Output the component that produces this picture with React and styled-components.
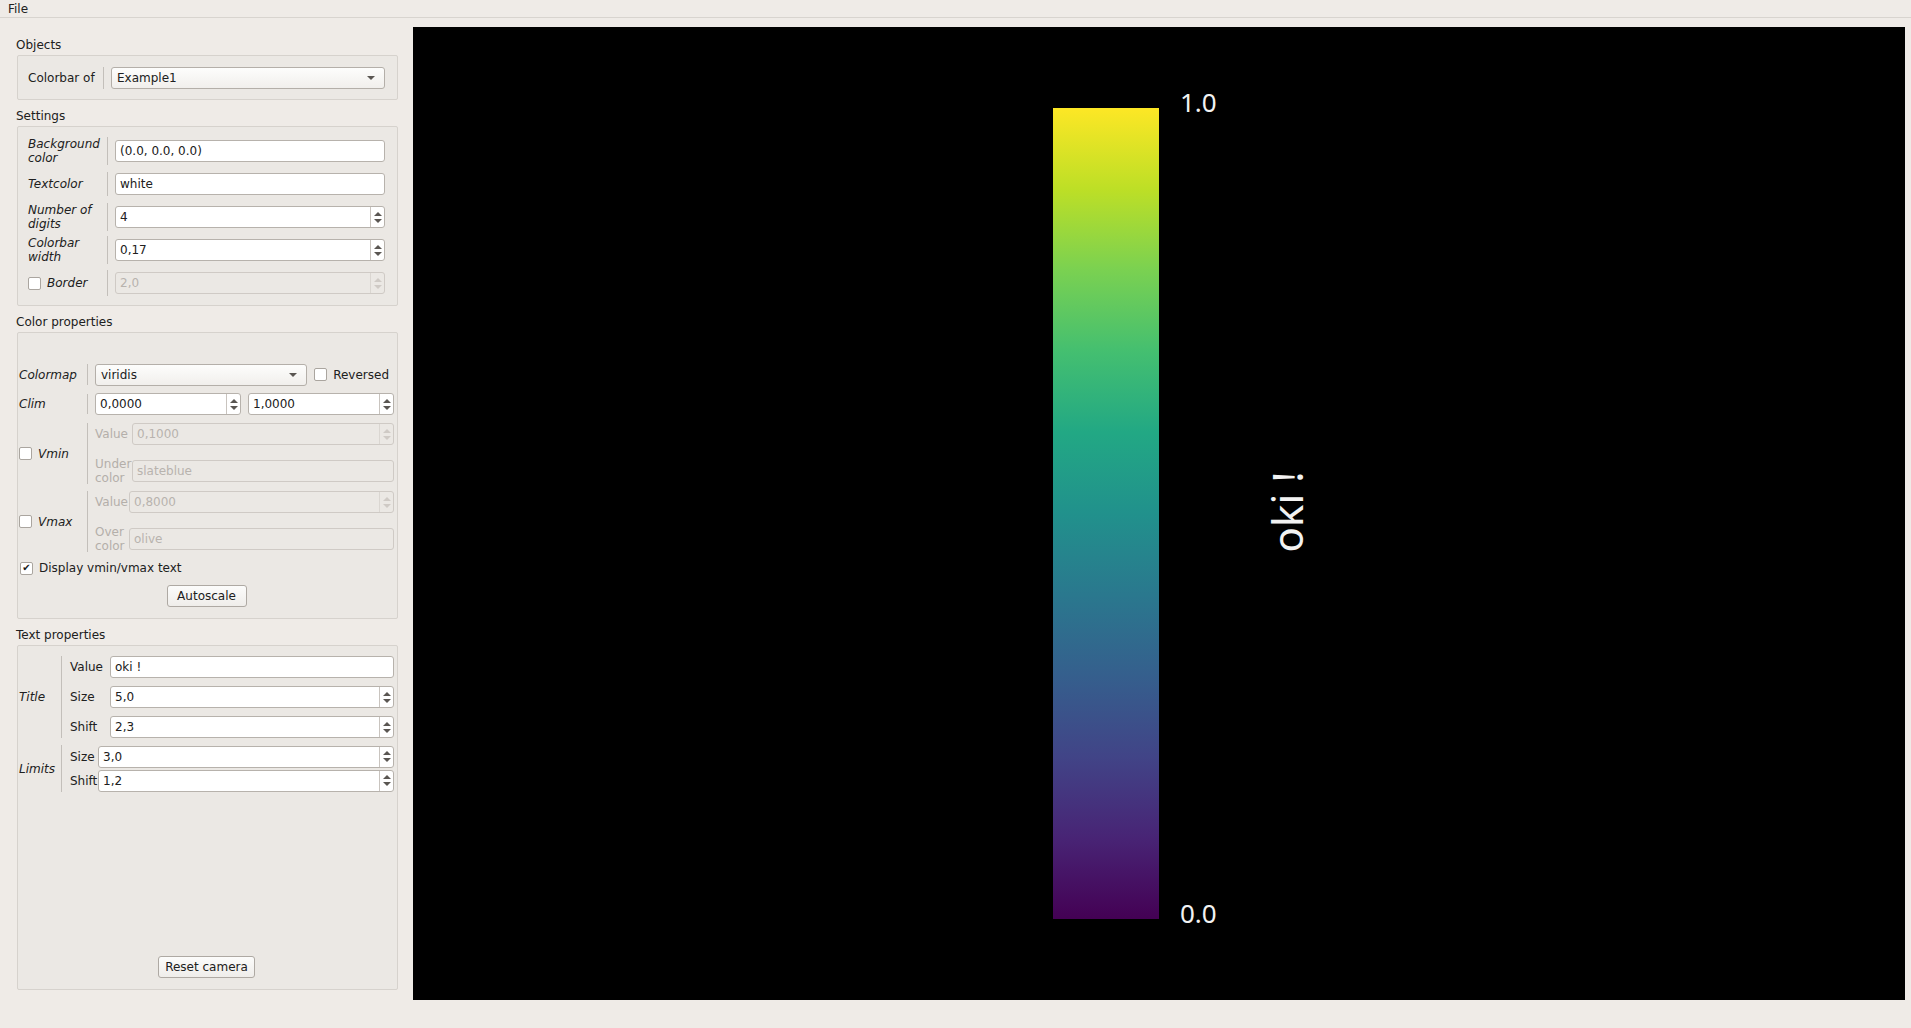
import styled, { createGlobalStyle } from "styled-components";

const GlobalStyle = createGlobalStyle`
  html, body {
    margin: 0;
    padding: 0;
  }
  body {
    background: #efebe7;
    font-family: "DejaVu Sans", "Liberation Sans", sans-serif;
    font-size: 12px;
    color: #202020;
    overflow: hidden;
  }
`;

const Window = styled.div`
  width: 1911px;
  height: 1028px;
  display: flex;
  flex-direction: column;
`;

const MenuBar = styled.div`
  height: 17px;
  border-bottom: 1px solid #d8d4cf;
  display: flex;
  align-items: center;
  padding-left: 8px;
  span {
    line-height: 14px;
  }
`;

const Body = styled.div`
  flex: 1;
  display: flex;
`;

const Sidebar = styled.div`
  width: 381px;
  flex-shrink: 0;
  padding: 19px 15px 0 17px;
  display: flex;
  flex-direction: column;
`;

const GroupTitle = styled.div`
  height: 14px;
  line-height: 14px;
  margin: 1px 0 3px -1px;
`;

const GroupBox = styled.div`
  box-sizing: border-box;
  height: ${(p) => p.$h}px;
  border: 1px solid #d6d2cd;
  border-radius: 2px;
  background: #ebe8e4;
  margin-bottom: 8px;
  padding: ${(p) => p.$pad};
  display: flex;
  flex-direction: column;
  gap: ${(p) => p.$gap || 0}px;
`;

const Row = styled.div`
  display: grid;
  grid-template-columns: ${(p) => p.$label}px 1px 1fr;
  column-gap: ${(p) => p.$gap || 7}px;
  align-items: center;
  height: ${(p) => p.$h}px;
`;

const Sep = styled.div`
  align-self: stretch;
  width: 1px;
  background: #c3bfba;
  margin: ${(p) => p.$m ?? 1}px 0;
`;

const Label = styled.div`
  font-style: ${(p) => (p.$italic ? "italic" : "normal")};
  color: ${(p) => (p.$disabled ? "#b4afaa" : "#202020")};
  line-height: 14px;
  display: flex;
  align-items: center;
  gap: 6px;
  white-space: nowrap;
`;

const Field = styled.div`
  box-sizing: border-box;
  height: 22px;
  border: 1px solid ${(p) => (p.$disabled ? "#cfcac5" : "#b7b2ac")};
  border-radius: 3px;
  background: ${(p) => (p.$disabled ? "#ebe8e4" : "#ffffff")};
  color: ${(p) => (p.$disabled ? "#b8b3ae" : "#202020")};
  display: flex;
  align-items: center;
  padding-left: 4px;
  overflow: hidden;
  min-width: 0;
  span {
    flex: 1;
    white-space: nowrap;
  }
`;

const Arrows = styled.div`
  width: 13px;
  align-self: stretch;
  border-left: 1px solid ${(p) => (p.$disabled ? "#dad6d1" : "#c9c4bf")};
  display: flex;
  flex-direction: column;
  align-items: center;
  justify-content: center;
  gap: 3px;
`;

const Tri = styled.div`
  width: 0;
  height: 0;
  border-left: 4px solid transparent;
  border-right: 4px solid transparent;
  ${(p) => (p.$up ? "border-bottom" : "border-top")}: 4px solid
    ${(p) => (p.$disabled ? "#cfcac5" : "#5a5652")};
`;

const Combo = styled.div`
  box-sizing: border-box;
  height: 22px;
  border: 1px solid #b4afa9;
  border-radius: 3px;
  background: linear-gradient(#fdfdfc, #f1efec);
  display: flex;
  align-items: center;
  justify-content: space-between;
  padding: 0 9px 0 5px;
  min-width: 0;
`;

const Box = styled.div`
  box-sizing: border-box;
  width: 13px;
  height: 13px;
  border: 1px solid #aaa59f;
  border-radius: 2px;
  background: #fff;
  display: flex;
  align-items: center;
  justify-content: center;
  font-size: 10px;
  font-style: normal;
  line-height: 1;
  color: #1a1a1a;
  flex-shrink: 0;
`;

const Button = styled.div`
  box-sizing: border-box;
  height: 22px;
  min-width: 80px;
  padding: 0 6px;
  border: 1px solid #aea9a3;
  border-radius: 3px;
  background: linear-gradient(#fcfcfb, #efedea);
  display: flex;
  align-items: center;
  justify-content: center;
  align-self: center;
`;

const Pair = styled.div`
  display: grid;
  grid-template-columns: ${(p) => p.$cols};
  column-gap: ${(p) => p.$gap || 7}px;
  align-items: center;
  min-width: 0;
`;

const SubBlock = styled.div`
  display: flex;
  flex-direction: column;
  gap: ${(p) => p.$gap}px;
`;

const SubRow = styled.div`
  display: grid;
  grid-template-columns: ${(p) => p.$label}px 1fr;
  column-gap: ${(p) => p.$gap || 2}px;
  align-items: center;
  height: ${(p) => p.$h || 22}px;
`;

const Spacer = styled.div`
  flex: 1;
`;

const Canvas = styled.div`
  flex: 1;
  background: #000;
  margin: 9px 6px 28px 0;
  svg {
    display: block;
  }
`;

function Spin({ value, disabled }) {
  return (
    <Field $disabled={disabled} style={{ paddingRight: 0 }}>
      <span>{value}</span>
      <Arrows $disabled={disabled}>
        <Tri $up $disabled={disabled} />
        <Tri $disabled={disabled} />
      </Arrows>
    </Field>
  );
}

function Select({ value }) {
  return (
    <Combo>
      <span>{value}</span>
      <Tri />
    </Combo>
  );
}

const viridis = [
  "#440154", "#482475", "#414487", "#355f8d", "#2a788e", "#21918c",
  "#22a884", "#44bf70", "#7ad151", "#bddf26", "#fde725",
];

function ColorbarView() {
  return (
    <svg width="1492" height="973" viewBox="0 0 1492 973">
      <defs>
        <linearGradient id="viridis" x1="0" y1="1" x2="0" y2="0">
          {viridis.map((c, i) => (
            <stop key={c} offset={i / (viridis.length - 1)} stopColor={c} />
          ))}
        </linearGradient>
      </defs>
      <rect x="640" y="81" width="106" height="811" fill="url(#viridis)" />
      <g fill="#f2f2f2" fontFamily="'Noto Sans', 'Open Sans', sans-serif">
        <text x="767" y="85" fontSize="26">1.0</text>
        <text x="767" y="896" fontSize="26">0.0</text>
        <text
          transform="translate(890 485) rotate(-90)"
          textAnchor="middle"
          fontSize="42"
        >
          oki !
        </text>
      </g>
    </svg>
  );
}

export default function App() {
  return (
    <Window>
      <GlobalStyle />
      <MenuBar>
        <span>File</span>
      </MenuBar>
      <Body>
        <Sidebar>
          <GroupTitle>Objects</GroupTitle>
          <GroupBox $h={45} $pad="11px 12px 0 10px">
            <Row $label={68} $h={22}>
              <Label>Colorbar of</Label>
              <Sep $m={0} />
              <Select value="Example1" />
            </Row>
          </GroupBox>

          <GroupTitle>Settings</GroupTitle>
          <GroupBox $h={180} $pad="9px 12px 0 10px" $gap={3}>
            <Row $label={72} $h={30}>
              <Label $italic>Background<br />color</Label>
              <Sep />
              <Field><span>(0.0, 0.0, 0.0)</span></Field>
            </Row>
            <Row $label={72} $h={30}>
              <Label $italic>Textcolor</Label>
              <Sep $m={3} />
              <Field><span>white</span></Field>
            </Row>
            <Row $label={72} $h={30}>
              <Label $italic>Number of<br />digits</Label>
              <Sep />
              <Spin value="4" />
            </Row>
            <Row $label={72} $h={30}>
              <Label $italic>Colorbar<br />width</Label>
              <Sep />
              <Spin value="0,17" />
            </Row>
            <Row $label={72} $h={30}>
              <Label $italic>
                <Box />
                Border
              </Label>
              <Sep $m={2} />
              <Spin value="2,0" disabled />
            </Row>
          </GroupBox>

          <GroupTitle>Color properties</GroupTitle>
          <GroupBox $h={287} $pad="30px 3px 0 1px">
            <Row $label={61} $h={23}>
              <Label $italic>Colormap</Label>
              <Sep />
              <Pair $cols="1fr auto">
                <Select value="viridis" />
                <Label style={{ paddingRight: 5 }}>
                  <Box />
                  Reversed
                </Label>
              </Pair>
            </Row>
            <Row $label={61} $h={22} style={{ marginTop: 7 }}>
              <Label $italic>Clim</Label>
              <Sep />
              <Pair $cols="1fr 1fr">
                <Spin value="0,0000" />
                <Spin value="1,0000" />
              </Pair>
            </Row>
            <Row $label={61} $h={61} style={{ marginTop: 8 }}>
              <Label $italic>
                <Box />
                Vmin
              </Label>
              <Sep $m={0} />
              <SubBlock $gap={12}>
                <SubRow $label={35}>
                  <Label $disabled>Value</Label>
                  <Spin value="0,1000" disabled />
                </SubRow>
                <SubRow $label={35} $h={27}>
                  <Label $disabled>Under<br />color</Label>
                  <Field $disabled><span>slateblue</span></Field>
                </SubRow>
              </SubBlock>
            </Row>
            <Row $label={61} $h={61} style={{ marginTop: 7 }}>
              <Label $italic>
                <Box />
                Vmax
              </Label>
              <Sep $m={0} />
              <SubBlock $gap={12}>
                <SubRow $label={32}>
                  <Label $disabled>Value</Label>
                  <Spin value="0,8000" disabled />
                </SubRow>
                <SubRow $label={32} $h={27}>
                  <Label $disabled>Over<br />color</Label>
                  <Field $disabled><span>olive</span></Field>
                </SubRow>
              </SubBlock>
            </Row>
            <Label style={{ height: 18, marginTop: 7, paddingLeft: 1 }}>
              <Box>✔</Box>
              Display vmin/vmax text
            </Label>
            <Button style={{ marginTop: 8 }}>Autoscale</Button>
          </GroupBox>

          <GroupTitle>Text properties</GroupTitle>
          <GroupBox $h={345} $pad="10px 3px 11px 1px">
            <Row $label={34} $gap={8} $h={82}>
              <Label $italic>Title</Label>
              <Sep $m={0} />
              <SubBlock $gap={8}>
                <SubRow $label={36} $gap={4}>
                  <Label>Value</Label>
                  <Field><span>oki !</span></Field>
                </SubRow>
                <SubRow $label={36} $gap={4}>
                  <Label>Size</Label>
                  <Spin value="5,0" />
                </SubRow>
                <SubRow $label={36} $gap={4}>
                  <Label>Shift</Label>
                  <Spin value="2,3" />
                </SubRow>
              </SubBlock>
            </Row>
            <Row $label={34} $gap={8} $h={47} style={{ marginTop: 7 }}>
              <Label $italic>Limits</Label>
              <Sep $m={0} />
              <SubBlock $gap={2}>
                <SubRow $label={27} $gap={1}>
                  <Label>Size</Label>
                  <Spin value="3,0" />
                </SubRow>
                <SubRow $label={27} $gap={1}>
                  <Label>Shift</Label>
                  <Spin value="1,2" />
                </SubRow>
              </SubBlock>
            </Row>
            <Spacer />
            <Button>Reset camera</Button>
          </GroupBox>
        </Sidebar>
        <Canvas>
          <ColorbarView />
        </Canvas>
      </Body>
    </Window>
  );
}
